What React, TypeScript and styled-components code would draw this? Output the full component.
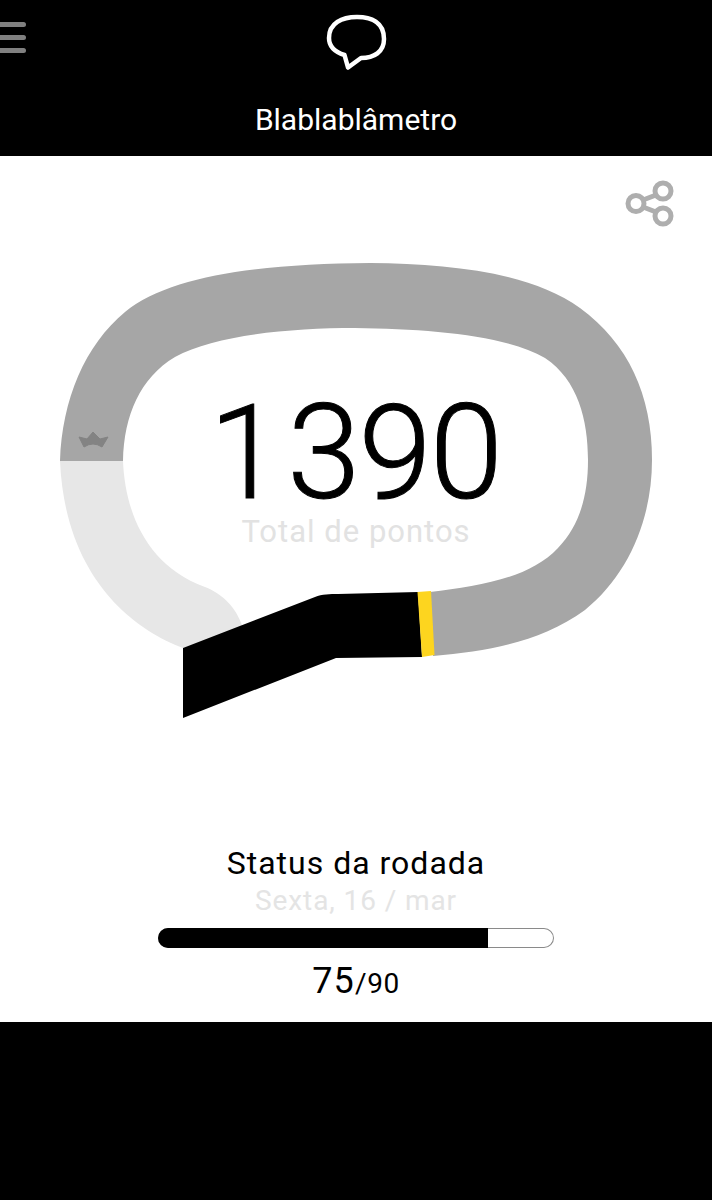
import styled, { createGlobalStyle } from "styled-components"

const RING =
    "M60 461 C62 400 85 345 125 312 C170 275 260 264 370 263 C450 264 530 272 580 308 C628 343 652 395 652 460 C652 520 628 575 585 610 C540 642 490 651 433 656 L430 592 C480 586 530 578 558 548 C580 525 588 495 588 460 C588 420 578 380 545 358 C505 335 430 329 355 328 C290 328 215 335 175 357 C140 378 124 415 123 461 Z"

const LOST =
    "M183 648 C130 628 65 575 60 461 L123 461 C125 510 145 565 205 587 C222 594 236 606 243 628 Z"

const App = () => {
    return (
        <Page>
            <GlobalStyle />
            <Header>
                <MenuButton>
                    <span></span>
                    <span></span>
                    <span></span>
                </MenuButton>
                <svg width="64" height="72" viewBox="0 0 64 72" fill="none">
                    <path
                        d="M33 7 C47 7 60 12 60 29 C60 42 50 48 37 48 L24 57.500 L20.500 45 C11 42 5 36 5 28 C5 13 18 7 33 7 Z"
                        stroke="#fff"
                        strokeWidth="4.500"
                        strokeLinejoin="round"
                    />
                </svg>
                <Title>Blablablâmetro</Title>
            </Header>
            <Main>
                <ShareRow>
                    <svg width="50" height="52" viewBox="0 0 50 52" fill="none" stroke="#aeaeae" strokeWidth="5">
                        <circle cx="38" cy="13" r="8" />
                        <circle cx="38" cy="38" r="8" />
                        <circle cx="11" cy="25.500" r="8" />
                        <path d="M31 17 L18 22 M18 29 L31 34" />
                    </svg>
                </ShareRow>
                <Gauge>
                    <svg width="712" height="520" viewBox="0 230 712 520">
                        <path d={RING} fill="#a6a6a6" />
                        <path d={LOST} fill="#e7e7e7" />
                        <path
                            d="M93 432 L100 439 L108 437 L102 447 Q93 441 84 447 L79 437 L87 439 Z"
                            fill="#838383"
                            stroke="#838383"
                            strokeWidth="1"
                            strokeLinejoin="round"
                        />
                        <path
                            d="M183 648 L315 597 C322 594 330 594 338 594 L418 592 L422 657 L336 658 L183 718 Z"
                            fill="#000"
                        />
                        <path d="M417.500 592 L431 591 L434.500 655 L422 657 Z" fill="#fdd51f" />
                    </svg>
                    <Score>
                        <Total>
                            <span>1</span>390
                        </Total>
                        <TotalLabel>Total de pontos</TotalLabel>
                    </Score>
                </Gauge>
                <Status>
                    <StatusTitle>Status da rodada</StatusTitle>
                    <StatusDate>Sexta, 16 / mar</StatusDate>
                    <Bar>
                        <BarFill style={{ width: `${(75 / 90) * 100}%` }} />
                    </Bar>
                    <Count>
                        75<small>/90</small>
                    </Count>
                </Status>
            </Main>
            <Footer />
        </Page>
    )
}

export default App

const GlobalStyle = createGlobalStyle`
    html, body {
        margin: 0;
        padding: 0;
        background: #000;
    }
    body {
        font-family: "Roboto", "Liberation Sans", sans-serif;
    }
`

const Page = styled.div`
    width: 712px;
    height: 1200px;
    display: flex;
    flex-direction: column;
    overflow: hidden;
`

const Header = styled.header`
    height: 156px;
    background: #000;
    position: relative;
    display: flex;
    flex-direction: column;
    align-items: center;
    padding-top: 10px;
    box-sizing: border-box;

    svg {
        flex: none;
    }
`

const MenuButton = styled.div`
    position: absolute;
    left: 0;
    top: 22px;
    width: 26px;
    display: flex;
    flex-direction: column;
    gap: 8px;

    span {
        display: block;
        height: 5px;
        background: #808080;
        border-radius: 0 3px 3px 0;
    }
`

const Title = styled.div`
    margin-top: 20px;
    color: #fff;
    font-size: 30px;
    line-height: 36px;
`

const Main = styled.main`
    height: 866px;
    background: #fff;
    display: flex;
    flex-direction: column;
`

const ShareRow = styled.div`
    height: 74px;
    display: flex;
    justify-content: flex-end;
    align-items: flex-start;
    padding: 22px 37px 0 0;
    box-sizing: border-box;
`

const Gauge = styled.div`
    position: relative;
    height: 520px;

    svg {
        display: block;
    }
`

const Score = styled.div`
    position: absolute;
    left: 0;
    right: 0;
    top: 162px;
    text-align: center;
`

const Total = styled.div`
    font-weight: 300;
    font-size: 132px;
    line-height: 122px;
    letter-spacing: -2px;
    padding-right: 2px;
    color: #000;
    -webkit-text-stroke: 1px #000;

    span {
        letter-spacing: 5px;
    }
`

const TotalLabel = styled.div`
    font-size: 31px;
    line-height: 36px;
    letter-spacing: 1px;
    color: #e2e2e2;
`

const Status = styled.section`
    margin-top: 93px;
    display: flex;
    flex-direction: column;
    align-items: center;
`

const StatusTitle = styled.div`
    font-size: 32px;
    line-height: 40px;
    letter-spacing: 1px;
    color: #000;
`

const StatusDate = styled.div`
    font-size: 28px;
    line-height: 36px;
    letter-spacing: 0.9px;
    color: #e4e4e4;
`

const Bar = styled.div`
    width: 396px;
    height: 20px;
    margin-top: 9px;
    box-shadow: inset 0 0 0 1px #8a8a8a;
    border-radius: 10px;
    overflow: hidden;
    background: #fff;
`

const BarFill = styled.div`
    height: 100%;
    background: #000;
`

const Count = styled.div`
    margin-top: 11px;
    font-size: 36px;
    line-height: 44px;
    letter-spacing: 1.2px;
    color: #000;

    small {
        font-size: 28px;
        letter-spacing: 0.6px;
    }
`

const Footer = styled.footer`
    flex: 1;
    background: #000;
`
